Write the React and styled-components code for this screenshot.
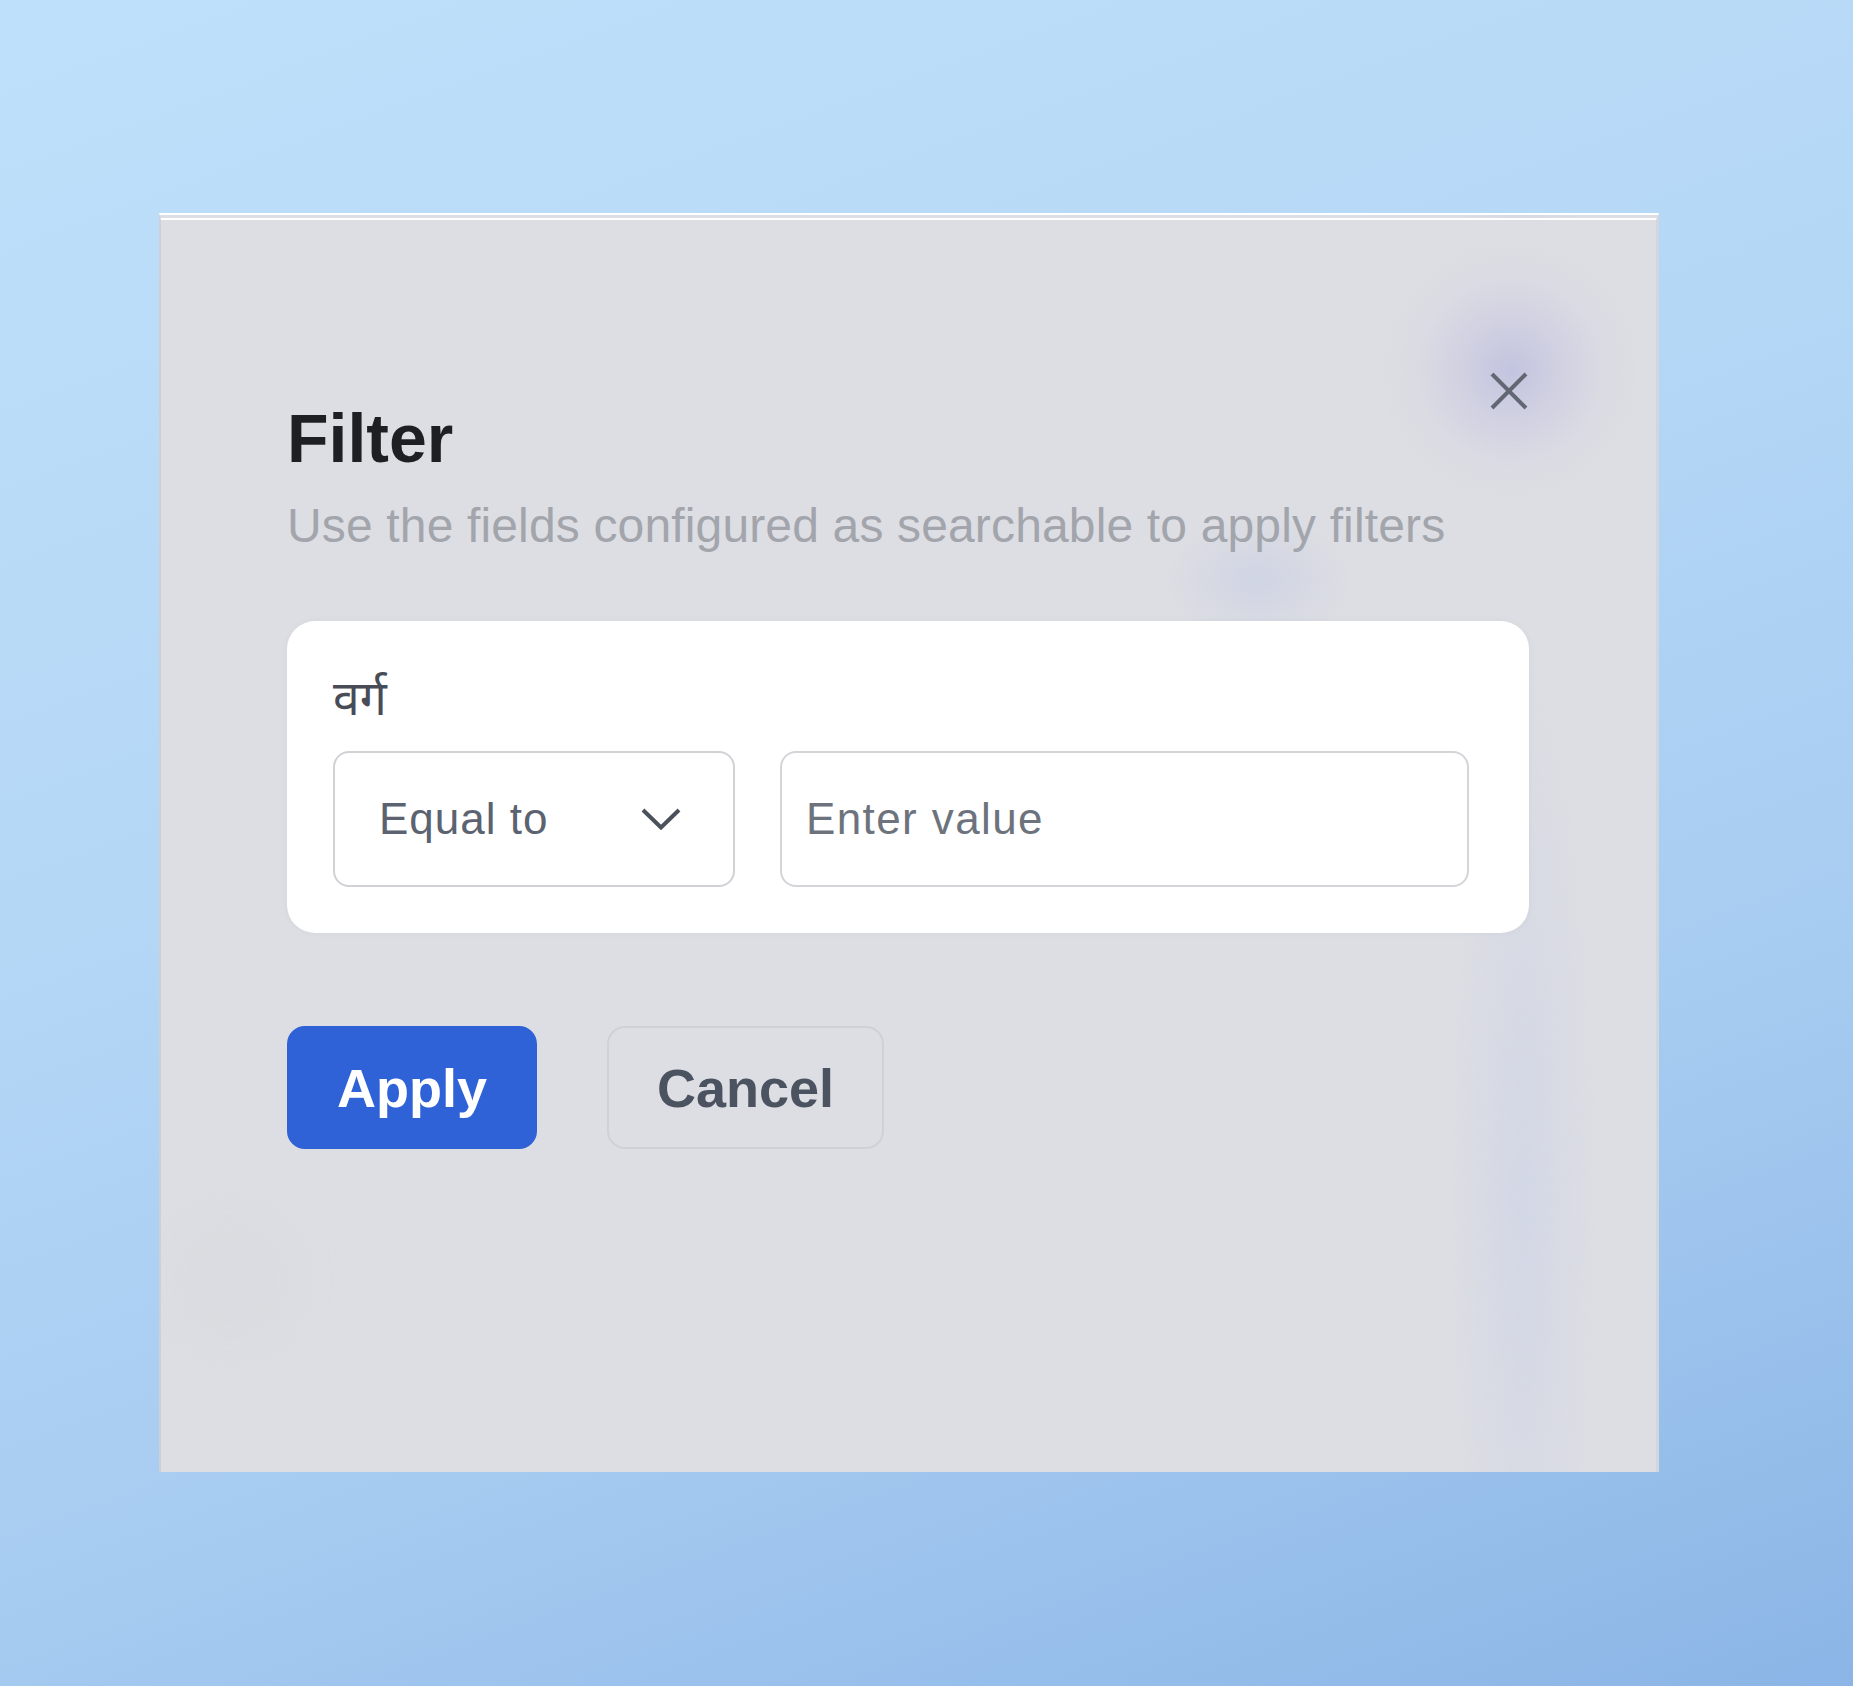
import React from 'react';
import styled, { createGlobalStyle } from 'styled-components';

const GlobalStyle = createGlobalStyle`
  html, body {
    margin: 0;
    padding: 0;
  }
  body {
    font-family: "Liberation Sans", Arial, sans-serif;
  }
`;

const Page = styled.div`
  width: 1853px;
  height: 1686px;
  box-sizing: border-box;
  padding: 213px 0 0 159px;
  background: linear-gradient(160deg, #bfe0fa 0%, #b4d7f6 40%, #a7ccf1 68%, #8bb5e6 100%);
  overflow: hidden;
`;

const Panel = styled.section`
  position: relative;
  box-sizing: border-box;
  width: 1500px;
  height: 1259px;
  padding: 178px 126px 0 126px;
  border-top: 7px double #ffffff;
  border-left: 2px solid #cdd0d6;
  border-right: 3px solid #d2d6dd;
  background:
    radial-gradient(circle at 1350px 150px, rgba(190, 191, 222, 0.85) 0, rgba(200, 201, 225, 0.6) 50px, rgba(212, 213, 226, 0.3) 95px, rgba(221, 222, 227, 0) 135px),
    radial-gradient(ellipse 95px 65px at 1098px 360px, rgba(202, 208, 228, 0.7), rgba(221, 222, 227, 0)),
    radial-gradient(ellipse 75px 560px at 1362px 980px, rgba(207, 213, 230, 0.75), rgba(221, 222, 227, 0)),
    radial-gradient(circle at 70px 1060px, rgba(214, 215, 220, 0.45), rgba(221, 222, 227, 0) 110px),
    #dddee3;
`;

const Title = styled.h2`
  margin: 0;
  font-size: 68px;
  line-height: 80px;
  font-weight: 700;
  color: #1e1f23;
`;

const Subtitle = styled.p`
  margin: 18px 0 0;
  font-size: 48px;
  line-height: 60px;
  letter-spacing: 0.15px;
  color: #a3a5ac;
`;

const CloseButton = styled.button`
  position: absolute;
  top: 152px;
  right: 128px;
  width: 38px;
  height: 38px;
  padding: 0;
  border: 0;
  background: none;
  color: #626873;
  display: flex;
`;

const Card = styled.div`
  box-sizing: border-box;
  width: 1242px;
  margin-top: 65px;
  padding: 58px 60px 46px 46px;
  background: #ffffff;
  border-radius: 28px;
  box-shadow: 0 0 6px rgba(60, 70, 90, 0.05);
`;

const FieldLabel = styled.div`
  font-family: "Noto Sans Devanagari", "Noto Sans", "Liberation Sans", sans-serif;
  font-size: 48px;
  line-height: 50px;
  color: #474c56;
`;

const FieldRow = styled.div`
  display: grid;
  grid-template-columns: 402px 1fr;
  gap: 45px;
  margin-top: 22px;
`;

const Select = styled.div`
  box-sizing: border-box;
  height: 136px;
  display: flex;
  align-items: center;
  justify-content: space-between;
  padding: 0 52px 0 44px;
  border: 2px solid #d0d2d6;
  border-radius: 16px;
  font-size: 44px;
  letter-spacing: 1px;
  color: #5b6270;
`;

const ValueInput = styled.input`
  box-sizing: border-box;
  height: 136px;
  width: 100%;
  padding: 0 24px;
  border: 2px solid #d3d5d9;
  border-radius: 16px;
  font-family: "Liberation Sans", Arial, sans-serif;
  font-size: 44px;
  letter-spacing: 1.4px;
  color: #3c414a;
  background: #ffffff;
  outline: none;

  &::placeholder {
    color: #6d737c;
  }
`;

const Actions = styled.div`
  display: flex;
  gap: 70px;
  margin-top: 93px;
`;

const Button = styled.button`
  box-sizing: border-box;
  height: 123px;
  padding: 0 48px;
  border-radius: 18px;
  font-family: "Liberation Sans", Arial, sans-serif;
  font-size: 54px;
  font-weight: 700;
  border: 2px solid ${(p) => (p.$primary ? '#2f62d6' : '#cfd1d6')};
  background: ${(p) => (p.$primary ? '#2f62d6' : 'transparent')};
  color: ${(p) => (p.$primary ? '#ffffff' : '#4b5260')};
`;

const Chevron = () => (
  <svg width="40" height="22" viewBox="0 0 40 22" fill="none">
    <polyline points="2,2 20,19.5 38,2" stroke="#4b515b" strokeWidth="4" />
  </svg>
);

const CloseIcon = () => (
  <svg width="38" height="38" viewBox="0 0 38 38" fill="none">
    <line x1="2" y1="2" x2="36" y2="36" stroke="currentColor" strokeWidth="4" />
    <line x1="36" y1="2" x2="2" y2="36" stroke="currentColor" strokeWidth="4" />
  </svg>
);

const App = () => (
  <>
    <GlobalStyle />
    <Page>
      <Panel>
        <CloseButton aria-label="Close">
          <CloseIcon />
        </CloseButton>
        <Title>Filter</Title>
        <Subtitle>Use the fields configured as searchable to apply filters</Subtitle>
        <Card>
          <FieldLabel>वर्ग</FieldLabel>
          <FieldRow>
            <Select>
              <span>Equal to</span>
              <Chevron />
            </Select>
            <ValueInput placeholder="Enter value" />
          </FieldRow>
        </Card>
        <Actions>
          <Button $primary>Apply</Button>
          <Button>Cancel</Button>
        </Actions>
      </Panel>
    </Page>
  </>
);

export default App;
